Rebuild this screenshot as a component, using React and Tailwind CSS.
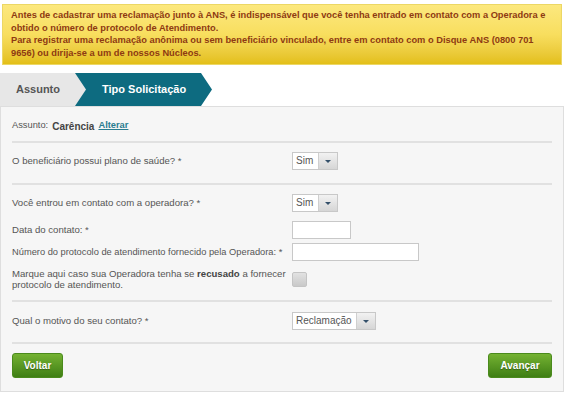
import React from "react";

function Select({ value, w }) {
  return (
    <div className="flex h-[18px] border border-[#c8c8c8] bg-white" style={{ width: w }}>
      <div className="flex-1 flex items-center pl-[3px] text-[10px] text-[#555] leading-none">{value}</div>
      <div className="w-[19px] border-l border-[#cfcfcf] bg-gradient-to-b from-[#f2f2f2] to-[#d6d6d6] flex items-center justify-center">
        <div className="w-0 h-0 border-l-[3px] border-r-[3px] border-t-[3px] border-l-transparent border-r-transparent border-t-[#34506a]" />
      </div>
    </div>
  );
}

function Sep() {
  return <div className="h-[2px] bg-[#e1e1e1]" />;
}

function Label({ children }) {
  return <div className="w-[280px] shrink-0 whitespace-nowrap text-[9.6px] text-[#555] leading-[11.5px]">{children}</div>;
}

export default function App() {
  return (
    <div className="w-[567px] h-[398px] bg-white overflow-hidden font-['Liberation_Sans',Arial,sans-serif]">
      <div className="pt-[4px] pl-[2px]">
        <div className="w-[560px] h-[61px] border border-[#ecd765] bg-gradient-to-b from-[#fce87e] via-[#f8de5e] to-[#e3bf16] pl-[8px] pr-[8px] pt-[4px] text-[9.3px] font-bold leading-[12.7px] text-[#8e3a12]">
          Antes de cadastrar uma reclamação junto à ANS, é indispensável que você tenha entrado em contato com a Operadora e obtido o número de protocolo de Atendimento.
          <br />
          Para registrar uma reclamação anônima ou sem beneficiário vinculado, entre em contato com o Disque ANS (0800 701 9656) ou dirija-se a um de nossos Núcleos.
        </div>
      </div>

      <div className="mt-[8px] flex h-[33px]">
        <div className="w-[86px] bg-[#e7e7e7] flex items-center pl-[16px] text-[11px] font-bold text-[#555]">
          Assunto
        </div>
        <div className="-ml-[11px] w-[137px] bg-[#0d6b80] [clip-path:polygon(0_0,126px_0,100%_50%,126px_100%,0_100%,11px_50%)] flex items-center pl-[27px] text-[11px] font-bold text-white">
          Tipo Solicitação
        </div>
      </div>

      <div className="w-[564px] h-[286px] border border-[#dedede] bg-[#f6f6f6] px-[11px]">
        <div className="h-[34px] pt-[4px] flex items-center text-[9.3px] text-[#555]">
          <span>Assunto:</span>
          <span className="ml-[4px] text-[10px] font-bold text-[#444]">Carência</span>
          <span className="ml-[4px] font-bold underline text-[#2a7d90]">Alterar</span>
        </div>
        <Sep />
        <div className="h-[40px] flex items-center pb-[4px]">
          <Label>O beneficiário possui plano de saúde? *</Label>
          <Select value="Sim" w={46} />
        </div>
        <Sep />
        <div className="pt-[9px] pb-[7px]">
          <div className="flex items-center h-[18px]">
            <Label>Você entrou em contato com a operadora? *</Label>
            <Select value="Sim" w={46} />
          </div>
          <div className="flex items-center h-[18px] mt-[9px]">
            <Label>Data do contato: *</Label>
            <div className="w-[59px] h-[18px] border border-[#c8c8c8] bg-white" />
          </div>
          <div className="flex items-center h-[18px] mt-[4px]">
            <Label><span className="text-[9.3px]">Número do protocolo de atendimento fornecido pela Operadora: *</span></Label>
            <div className="w-[127px] h-[18px] border border-[#c8c8c8] bg-white" />
          </div>
          <div className="flex items-center h-[28px] mt-[4px]">
            <Label>
              Marque aqui caso sua Operadora tenha se <b className="text-[#444]">recusado</b> a fornecer
              <br />
              protocolo de atendimento.
            </Label>
            <div className="w-[15px] h-[15px] rounded-[2px] border border-[#c4c4c4] bg-gradient-to-b from-[#e2e2e2] to-[#c9c9c9]" />
          </div>
        </div>
        <Sep />
        <div className="h-[40px] flex items-center pb-[2px]">
          <Label>Qual o motivo do seu contato? *</Label>
          <Select value="Reclamação" w={84} />
        </div>
        <Sep />
        <div className="pt-[9px] flex justify-between">
          <button className="h-[25px] w-[51px] rounded-[3px] border border-[#4a8a1c] bg-gradient-to-b from-[#74b232] to-[#3f7f14] text-[10px] font-bold text-white [text-shadow:0_1px_1px_rgba(0,0,0,0.35)]">
            Voltar
          </button>
          <button className="h-[25px] w-[64px] rounded-[3px] border border-[#4a8a1c] bg-gradient-to-b from-[#74b232] to-[#3f7f14] text-[10px] font-bold text-white [text-shadow:0_1px_1px_rgba(0,0,0,0.35)]">
            Avançar
          </button>
        </div>
      </div>
    </div>
  );
}
